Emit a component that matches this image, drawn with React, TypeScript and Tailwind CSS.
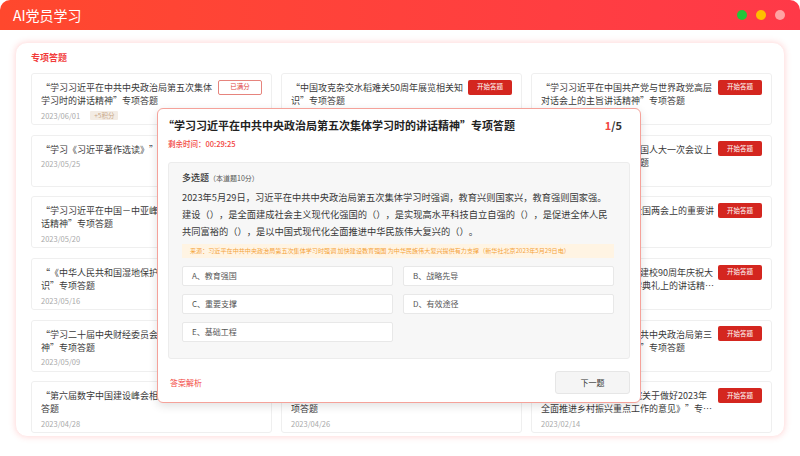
import React from "react";

type Topic = {
  title: string;
  date: string;
  done?: boolean;
  bonus?: string;
};

const topics: Topic[] = [
  { title: "“学习习近平在中共中央政治局第五次集体学习时的讲话精神”专项答题", date: "2023/06/01", done: true, bonus: "+5积分" },
  { title: "“中国攻克杂交水稻难关50周年展览相关知识”专项答题", date: "2023/05/30" },
  { title: "“学习习近平在中国共产党与世界政党高层对话会上的主旨讲话精神”专项答题", date: "2023/03/16" },
  { title: "“学习《习近平著作选读》”专项答题", date: "2023/05/25" },
  { title: "“学习习近平在二十届中共中央政治局第四次集体学习时的讲话精神”专项答题", date: "2023/05/24" },
  { title: "“学习习近平在十四届全国人大一次会议上的重要讲话精神”专项答题", date: "2023/03/14" },
  { title: "“学习习近平在中国－中亚峰会上的主旨讲话精神”专项答题", date: "2023/05/20" },
  { title: "“学习《习近平关于调查研究论述摘编》”专项答题", date: "2023/05/18" },
  { title: "“学习习近平在2023年全国两会上的重要讲话精神”专项答题", date: "2023/03/10" },
  { title: "“《中华人民共和国湿地保护法》学习周知识”专项答题", date: "2023/05/16" },
  { title: "“学习习近平在庆祝中国共产主义青年团成立100周年大会上的讲话精神”专项答题", date: "2023/05/12" },
  { title: "“学习习近平在中央党校建校90周年庆祝大会暨2023年春季学期开学典礼上的讲话精神”专项答题", date: "2023/03/02" },
  { title: "“学习二十届中央财经委员会第一次会议精神”专项答题", date: "2023/05/09" },
  { title: "“学习《习近平关于全面从严治党论述摘编》”专项答题", date: "2023/05/04" },
  { title: "“学习习近平在二十届中共中央政治局第三次集体学习时的讲话精神”专项答题", date: "2023/02/24" },
  { title: "“第六届数字中国建设峰会相关知识”专项答题", date: "2023/04/28" },
  { title: "“学习中央审计委员会第一次会议精神”专项答题", date: "2023/04/26", done: true },
  { title: "“学习《中共中央 国务院关于做好2023年全面推进乡村振兴重点工作的意见》”专项答题", date: "2023/02/14" },
];

const options = ["A、教育强国", "B、战略先导", "C、重要支撑", "D、有效途径", "E、基础工程"];

function TopicCard({ item }: { item: Topic }) {
  return (
    <div className="h-[52px] bg-white border border-[#efefef] rounded-[3px] flex items-start gap-[3px] pl-[9px] pr-[9px] pt-[7px]">
      <div className="flex-1 min-w-0">
        <p className="text-[9px] leading-[13px] text-[#3a3a3a] line-clamp-2">{item.title}</p>
        <div className="flex items-center mt-[3.5px] h-[10px]">
          <span className="text-[7.5px] leading-[10px] text-[#a9a9a9]">{item.date}</span>
          {item.bonus && (
            <span className="ml-[10px] h-[9px] px-[4px] bg-[#f3ece4] text-[#c9a98b] text-[6.5px] leading-[9px] rounded-[1px]">
              {item.bonus}
            </span>
          )}
        </div>
      </div>
      {item.done ? (
        <div className="-mt-[1.5px] w-[44px] h-[15px] shrink-0 rounded-[2px] border border-[#e6847d] bg-white text-[#e0463f] text-[6.5px] flex items-center justify-center">
          已满分
        </div>
      ) : (
        <div className="-mt-[1.5px] w-[44px] h-[15px] shrink-0 rounded-[2px] bg-[#d4261f] text-white text-[6.5px] flex items-center justify-center">
          开始答题
        </div>
      )}
    </div>
  );
}

export default function App() {
  return (
    <div className="relative w-[800px] h-[456px] overflow-hidden bg-white font-['Noto_Sans_CJK_SC','Noto_Sans',sans-serif] [text-spacing-trim:space-all]">
      <header className="h-[30px] rounded-t-[10px] bg-linear-to-r from-[#ff482d] to-[#ff3948] flex items-center justify-between pl-[13px] pr-[15px]">
        <span className="text-white text-[14px] leading-none">AI党员学习</span>
        <div className="flex items-center gap-[9px]">
          <span className="w-[10px] h-[10px] rounded-full bg-[#22c53a]" />
          <span className="w-[10px] h-[10px] rounded-full bg-[#ffbf00]" />
          <span className="w-[10px] h-[10px] rounded-full bg-[#ffa3a3]" />
        </div>
      </header>

      <main className="mx-[15px] mt-[12px] h-[395px] bg-white rounded-[12px] border border-[#ffeaea] shadow-[0_0_6px_rgba(255,80,80,0.22)] pl-[15px] pr-[12px] pt-[9px] overflow-hidden">
        <div className="text-[9px] leading-[12px] font-bold text-[#f23b3b]">专项答题</div>
        <div className="grid grid-cols-3 gap-x-[9px] gap-y-[9.7px] mt-[9px]">
          {topics.map((t, i) => (
            <TopicCard key={i} item={t} />
          ))}
        </div>
      </main>

      <div className="absolute left-[157px] top-[108px] w-[484px] bg-white border border-[#f5a29a] rounded-[6px] shadow-[0_3px_10px_rgba(0,0,0,0.12)] px-[10px] pt-[9px] pb-[8px]">
        <div className="flex items-center justify-between">
          <h2 className="-ml-[5px] text-[11px] leading-[14px] font-bold text-[#222]">
            “学习习近平在中共中央政治局第五次集体学习时的讲话精神”专项答题
          </h2>
          <span className="mr-[8px] text-[11px] leading-[14px] font-bold text-[#333]">
            <span className="text-[#f2453d]">1</span>/5
          </span>
        </div>
        <div className="mt-[7px] text-[7.5px] leading-[10px] font-medium text-[#f2453d]">剩余时间：00:29:25</div>

        <div className="mt-[13px] bg-[#f7f7f7] border border-[#ececec] rounded-[3px] pl-[13px] pr-[15px] pt-[9px] pb-[16px]">
          <div className="flex items-baseline">
            <span className="text-[9px] leading-[12px] font-medium text-[#333]">多选题</span>
            <span className="text-[7px] text-[#555]">（本道题10分）</span>
          </div>
          <p className="mt-[5px] text-[9.25px] leading-[17px] text-[#383838]">
            2023年5月29日，习近平在中共中央政治局第五次集体学习时强调，教育兴则国家兴，教育强则国家强。建设（），是全面建成社会主义现代化强国的（），是实现高水平科技自立自强的（），是促进全体人民共同富裕的（），是以中国式现代化全面推进中华民族伟大复兴的（）。
          </p>
          <div className="mt-[4px] h-[14px] bg-[#fff4e3] text-[6.1px] text-[#f5a33a] flex items-center pl-[8px] whitespace-nowrap overflow-hidden">
            来源：习近平在中共中央政治局第五次集体学习时强调 加快建设教育强国 为中华民族伟大复兴提供有力支撑（新华社北京2023年5月29日电）
          </div>
          <div className="mt-[8px] grid grid-cols-2 gap-x-[10px] gap-y-[8px]">
            {options.map((o) => (
              <div
                key={o}
                className="h-[20px] bg-white border border-[#e8e8e8] rounded-[2px] flex items-center pl-[9px] text-[8px] text-[#555]"
              >
                {o}
              </div>
            ))}
          </div>
        </div>

        <div className="mt-[12px] flex items-center justify-between">
          <span className="ml-[2px] text-[8px] text-[#f2453d]">答案解析</span>
          <button className="w-[75px] h-[23px] bg-[#f5f5f5] border border-[#e6e6e6] rounded-[3px] text-[8px] text-[#333] flex items-center justify-center">
            下一题
          </button>
        </div>
      </div>
    </div>
  );
}
